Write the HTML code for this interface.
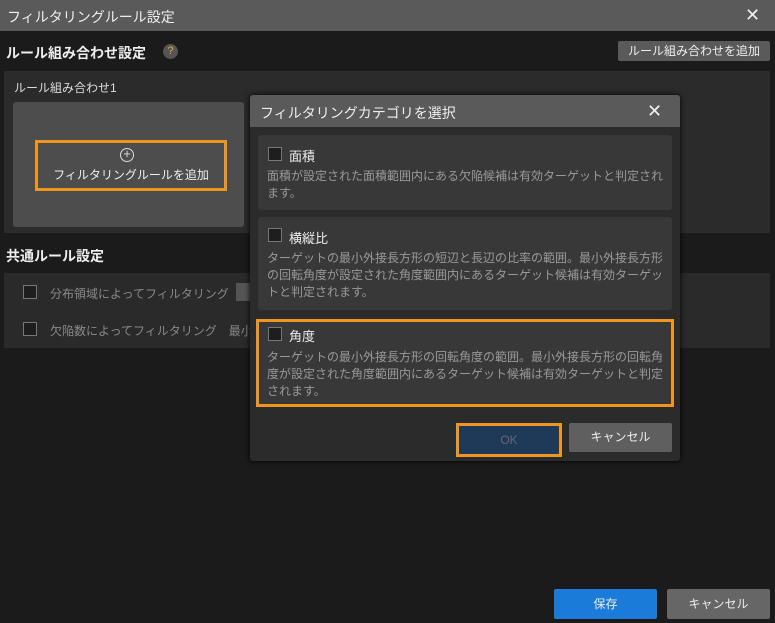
<!DOCTYPE html>
<html><head><meta charset="utf-8"><style>
*{margin:0;padding:0;box-sizing:border-box}
body{width:775px;height:623px;background:#1b1b1b;font-family:"Liberation Sans","Noto Sans CJK JP",sans-serif;color:#ddd;position:relative;overflow:hidden;font-size:12px}
.a{position:absolute}
.cb{position:absolute;width:14px;height:14px;border:1px solid #777;background:#1e1e1e}
.x{font-size:18px;color:#eee}
</style></head><body>
<div class="a" style="left:0;top:0;width:775px;height:31px;background:#5a5a5a"></div>
<div class="a" style="left:7px;top:7px;font-size:14px;color:#eee">フィルタリングルール設定</div>
<div class="a x" style="left:745px;top:5px">✕</div>
<div class="a" style="left:6px;top:43px;font-size:14px;font-weight:bold;color:#eee">ルール組み合わせ設定</div>
<div class="a" style="left:163px;top:44px;width:15px;height:15px;border-radius:50%;background:#555;color:#e0b030;font-size:11px;text-align:center;line-height:15px">?</div>
<div class="a" style="left:618px;top:41px;width:152px;height:20px;background:#5a5a5a;border-radius:2px;color:#eee;font-size:12px;text-align:center;line-height:20px">ルール組み合わせを追加</div>
<div class="a" style="left:4px;top:71px;width:766px;height:162px;background:#2b2b2b"></div>
<div class="a" style="left:14px;top:79px;color:#ddd">ルール組み合わせ1</div>
<div class="a" style="left:13px;top:102px;width:231px;height:125px;background:#4d4d4d;border-radius:3px"></div>
<div class="a" style="left:35px;top:140px;width:192px;height:51px;border:3px solid #f0961e"></div>
<div class="a" style="left:120px;top:148px;width:14px;height:14px;border:1.5px solid #ddd;border-radius:50%;text-align:center;line-height:10px;font-size:13px;color:#ddd">+</div>
<div class="a" style="left:35px;top:166px;width:192px;text-align:center;color:#eee">フィルタリングルールを追加</div>
<div class="a" style="left:6px;top:246px;font-size:14px;font-weight:bold;color:#eee">共通ルール設定</div>
<div class="a" style="left:4px;top:273px;width:766px;height:75px;background:#2a2a2a"></div>
<div class="cb" style="left:23px;top:285px"></div>
<div class="a" style="left:50px;top:285px;color:#888">分布領域によってフィルタリング</div>
<div class="a" style="left:236px;top:283px;width:14px;height:18px;background:#555"></div>
<div class="cb" style="left:23px;top:322px"></div>
<div class="a" style="left:50px;top:322px;color:#888">欠陥数によってフィルタリング　最小</div>

<div class="a" style="left:250px;top:95px;width:430px;height:366px;background:#2b2b2b;border-radius:3px;box-shadow:0 0 6px #000"></div>
<div class="a" style="left:250px;top:95px;width:430px;height:32px;background:#5a5a5a;border-radius:3px 3px 0 0"></div>
<div class="a" style="left:260px;top:103px;font-size:14px;color:#eee">フィルタリングカテゴリを選択</div>
<div class="a x" style="left:647px;top:101px">✕</div>

<div class="a" style="left:258px;top:135px;width:414px;height:75px;background:#383838;border-radius:3px"></div>
<div class="cb" style="left:268px;top:147px"></div>
<div class="a" style="left:289px;top:146px;font-size:13px;color:#eee">面積</div>
<div class="a" style="left:267px;top:168px;width:400px;line-height:17px;color:#999">面積が設定された面積範囲内にある欠陥候補は有効ターゲットと判定されます。</div>

<div class="a" style="left:258px;top:217px;width:414px;height:93px;background:#383838;border-radius:3px"></div>
<div class="cb" style="left:268px;top:228px"></div>
<div class="a" style="left:289px;top:228px;font-size:13px;color:#eee">横縦比</div>
<div class="a" style="left:267px;top:250px;width:402px;line-height:17px;color:#999">ターゲットの最小外接長方形の短辺と長辺の比率の範囲。最小外接長方形の回転角度が設定された角度範囲内にあるターゲット候補は有効ターゲットと判定されます。</div>

<div class="a" style="left:256px;top:319px;width:418px;height:88px;background:#383838;border:3px solid #f0961e"></div>
<div class="cb" style="left:268px;top:327px"></div>
<div class="a" style="left:289px;top:326px;font-size:13px;color:#eee">角度</div>
<div class="a" style="left:267px;top:349px;width:402px;line-height:17px;color:#999">ターゲットの最小外接長方形の回転角度の範囲。最小外接長方形の回転角度が設定された角度範囲内にあるターゲット候補は有効ターゲットと判定されます。</div>

<div class="a" style="left:456px;top:423px;width:106px;height:34px;border:3px solid #f0961e;background:#1f3a58;color:#667;text-align:center;line-height:28px">OK</div>
<div class="a" style="left:569px;top:423px;width:103px;height:29px;background:#5f5f5f;border-radius:2px;color:#eee;text-align:center;line-height:29px">キャンセル</div>

<div class="a" style="left:554px;top:589px;width:103px;height:30px;background:#1a7bd8;border-radius:2px;color:#eee;text-align:center;line-height:30px">保存</div>
<div class="a" style="left:667px;top:589px;width:103px;height:30px;background:#666;border-radius:2px;color:#eee;text-align:center;line-height:30px">キャンセル</div>
</body></html>
